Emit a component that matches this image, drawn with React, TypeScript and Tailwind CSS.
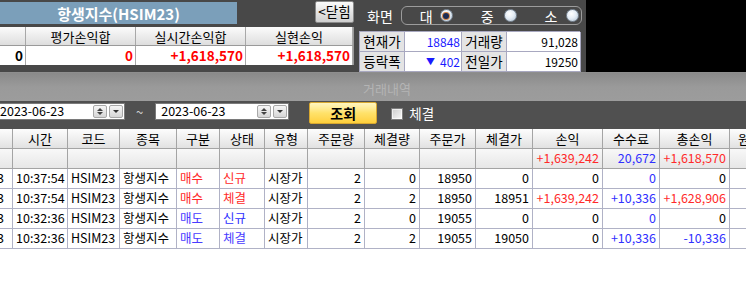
import React from "react";

type Cell = { t: string; c?: string; a?: "l" | "r" | "c" | "d" };

const RED = "text-[#ff2a2a]";
const BLUE = "text-[#3030ff]";
const VIOLET = "text-[#4a3cff]";

const cols =
  "grid grid-cols-[13px_55px_52px_57px_43px_45px_43px_57px_55px_56px_57px_70px_57px_70px_29px]";

const headers = ["", "시간", "코드", "종목", "구분", "상태", "유형", "주문량", "체결량", "주문가", "체결가", "손익", "수수료", "총손익", "원"];

const mk = (
  time: string,
  gb: string,
  gbc: string,
  st: string,
  stc: string,
  q1: string,
  q2: string,
  p1: string,
  p2: string,
  pl: Cell,
  fee: Cell,
  tot: Cell
): Cell[] => [
  { t: "2023-06-23", a: "d" },
  { t: time, a: "l" },
  { t: "HSIM23", a: "l" },
  { t: "항생지수", a: "l" },
  { t: gb, c: gbc, a: "l" },
  { t: st, c: stc, a: "l" },
  { t: "시장가", a: "l" },
  { t: q1, a: "r" },
  { t: q2, a: "r" },
  { t: p1, a: "r" },
  { t: p2, a: "r" },
  { ...pl, a: "r" },
  { ...fee, a: "r" },
  { ...tot, a: "r" },
  { t: "" },
];

const rows: Cell[][] = [
  mk("10:37:54", "매수", RED, "신규", RED, "2", "0", "18950", "0", { t: "0" }, { t: "0", c: BLUE }, { t: "0" }),
  mk("10:37:54", "매수", RED, "체결", RED, "2", "2", "18950", "18951", { t: "+1,639,242", c: RED }, { t: "+10,336", c: BLUE }, { t: "+1,628,906", c: RED }),
  mk("10:32:36", "매도", VIOLET, "신규", BLUE, "2", "0", "19055", "0", { t: "0" }, { t: "0", c: BLUE }, { t: "0" }),
  mk("10:32:36", "매도", VIOLET, "체결", VIOLET, "2", "2", "19055", "19050", { t: "0" }, { t: "+10,336", c: BLUE }, { t: "-10,336", c: BLUE }),
];

const summary: Cell[] = headers.map((_, i) => {
  if (i === 11) return { t: "+1,639,242", c: RED, a: "r" };
  if (i === 12) return { t: "20,672", c: BLUE, a: "r" };
  if (i === 13) return { t: "+1,618,570", c: RED, a: "r" };
  return { t: "" };
});

function Radio({ on }: { on?: boolean }) {
  return (
    <span className="w-[13px] h-[13px] rounded-full border border-[#7d8a98] bg-[radial-gradient(circle_at_40%_35%,#ffffff_0%,#e6eef6_45%,#aebfd0_100%)] flex items-center justify-center">
      {on && <span className="w-[6px] h-[6px] rounded-full bg-[#1c2c55] ring-1 ring-[#d4874a]" />}
    </span>
  );
}

function Spin() {
  return (
    <div className="flex items-center gap-[2px]">
      <div className="w-[14px] h-[13px] rounded-[2px] border border-[#a8a8a8] bg-gradient-to-b from-[#f6f6f6] to-[#d6d6d6] flex flex-col items-center justify-center gap-[1px]">
        <span className="w-0 h-0 border-l-[3px] border-r-[3px] border-b-[3px] border-l-transparent border-r-transparent border-b-[#444]" />
        <span className="w-0 h-0 border-l-[3px] border-r-[3px] border-t-[3px] border-l-transparent border-r-transparent border-t-[#444]" />
      </div>
      <div className="w-[14px] h-[13px] rounded-[2px] border border-[#a8a8a8] bg-gradient-to-b from-[#f6f6f6] to-[#d6d6d6] flex items-center justify-center">
        <span className="w-0 h-0 border-l-[3px] border-r-[3px] border-t-[3px] border-l-transparent border-r-transparent border-t-[#333]" />
      </div>
    </div>
  );
}

function GridCell({ c, h }: { c: Cell; h?: boolean }) {
  const align =
    c.a === "r"
      ? "justify-end pr-[3px]"
      : c.a === "d"
      ? "justify-end pr-[8px]"
      : c.a === "l"
      ? "justify-start pl-[3px]"
      : "justify-center";
  return (
    <div
      className={`h-[20px] flex items-center overflow-hidden whitespace-nowrap border-r border-b ${
        h ? "border-[#a4a4a4]" : "border-[#b0b2c6]"
      } ${align} ${c.c ?? "text-black"}`}
    >
      {c.t}
    </div>
  );
}

export default function App() {
  return (
    <div className="w-[746px] h-[298px] overflow-hidden bg-white relative font-['Noto_Sans_CJK_KR',sans-serif] leading-none">
      {/* top area */}
      <div className="flex h-[72px]">
        <div className="w-[586px] flex flex-col">
          <div className="h-[3px] bg-[#a6a6a6]" />
          <div className="flex-1 bg-[#484848] flex">
            {/* left panel */}
            <div className="w-[355px] flex flex-col">
              <div className="flex h-[24px] items-start">
                <div className="mt-[2px] h-[22px] w-[237px] bg-[#7b9fba] flex items-center justify-center text-white font-bold text-[15px]">
                  항생지수(HSIM23)
                </div>
                <div className="ml-auto mr-[1px] mt-[1px] h-[22px] w-[39px] rounded-[2px] border border-[#8a8a8a] bg-gradient-to-b from-[#fbfbfb] to-[#cfcfcf] flex items-center justify-center text-[13.5px] text-black">
                  &lt;닫힘
                </div>
              </div>
              <div className="mt-[3px] w-[354px] border-r border-[#9a9a9a]">
                <div className="grid grid-cols-[26px_110px_110px_107px] h-[18px] bg-gradient-to-b from-[#fbfbfb] to-[#dedede] text-[13px] text-black">
                  {["", "평가손익합", "실시간손익합", "실현손익"].map((t, i) => (
                    <div key={i} className="flex items-center justify-center border-r border-[#a8a8a8]">
                      {t}
                    </div>
                  ))}
                </div>
                <div className="grid grid-cols-[26px_110px_110px_107px] h-[20px] bg-white text-[13.5px] font-bold border-t border-[#9a9a9a]">
                  <div className="flex items-center justify-end pr-[2px] border-r border-[#a8a8a8] text-black">0</div>
                  <div className="flex items-center justify-end pr-[2px] border-r border-[#a8a8a8] text-[#ff0000]">0</div>
                  <div className="flex items-center justify-end pr-[2px] border-r border-[#a8a8a8] text-[#ff0000]">+1,618,570</div>
                  <div className="flex items-center justify-end pr-[2px] border-r border-[#a8a8a8] text-[#ff0000]">+1,618,570</div>
                </div>
              </div>
            </div>
            {/* right panel */}
            <div className="flex-1 flex flex-col pl-[4px]">
              <div className="flex items-center h-[28px] pt-[3px]">
                <span className="ml-[8px] text-white text-[14px]">화면</span>
                <div className="ml-[8px] w-[181px] h-[19px] rounded-[6px] border border-[#9c9c9c] flex items-center text-white text-[14px]">
                  <span className="ml-[18px]">대</span>
                  <span className="ml-[7px]"><Radio on /></span>
                  <span className="ml-[28px]">중</span>
                  <span className="ml-[10px]"><Radio /></span>
                  <span className="ml-[28px]">소</span>
                  <span className="ml-[9px]"><Radio /></span>
                </div>
              </div>
              <div className="mt-[3px] w-[221px] border-l border-t border-[#a8a8c0] grid grid-cols-[45px_57px_45px_74px] text-black">
                <div className="h-[20px] bg-[#e4e4e4] border-r border-b border-[#a8a8c0] flex items-center justify-center text-[13.5px]">현재가</div>
                <div className="h-[20px] bg-white border-r border-b border-[#a8a8c0] flex items-center justify-end pr-[1px] text-[12px] text-[#1a1aff]">18848</div>
                <div className="h-[20px] bg-[#e4e4e4] border-r border-b border-[#a8a8c0] flex items-center justify-center text-[13.5px]">거래량</div>
                <div className="h-[20px] bg-white border-r border-b border-[#a8a8c0] flex items-center justify-end pr-[2px] text-[12px]">91,028</div>
                <div className="h-[20px] bg-[#e4e4e4] border-r border-b border-[#a8a8c0] flex items-center justify-center text-[13.5px]">등락폭</div>
                <div className="h-[20px] bg-white border-r border-b border-[#a8a8c0] flex items-center justify-end pr-[1px] text-[12px] text-[#1a1aff]">
                  <span className="text-[9px] mr-[5px]">▼</span>402
                </div>
                <div className="h-[20px] bg-[#e4e4e4] border-r border-b border-[#a8a8c0] flex items-center justify-center text-[13.5px]">전일가</div>
                <div className="h-[20px] bg-white border-r border-b border-[#a8a8c0] flex items-center justify-end pr-[2px] text-[12px]">19250</div>
              </div>
            </div>
          </div>
        </div>
        <div className="flex-1 bg-black" />
      </div>

      {/* lower panel title */}
      <div className="h-[29px] bg-gradient-to-b from-[#8a8a8a] via-[#9a9a9a] to-[#9c9c9c] border-t border-[#8e8e8e] flex items-center justify-center pl-[28px] pt-[2px] text-[13px] text-[#b4b4b4]">
        거래내역
      </div>

      {/* toolbar */}
      <div className="h-[28px] bg-[#505050] flex items-start pt-[1px]">
        <div className="mt-[1px] w-[125px] h-[17px] bg-white border border-l-0 border-[#7a7a7a] flex items-center pr-[1px]">
          <span className="text-[12.5px] text-black">2023-06-23</span>
          <span className="ml-auto"><Spin /></span>
        </div>
        <span className="ml-[11px] mt-[3px] text-[#d0d0d0] text-[13px]">~</span>
        <div className="ml-[12px] mt-[1px] w-[134px] h-[17px] bg-white border border-[#7a7a7a] flex items-center pl-[5px] pr-[1px]">
          <span className="text-[12.5px] text-black">2023-06-23</span>
          <span className="ml-auto"><Spin /></span>
        </div>
        <div className="ml-[20px] w-[68px] h-[22px] rounded-[2px] border border-[#d8a830] bg-gradient-to-b from-[#fff6c0] via-[#ffe26a] to-[#ffcf3a] flex items-center justify-center font-bold text-[14px] text-black">
          조회
        </div>
        <div className="ml-[14px] mt-[6px] w-[12px] h-[12px] border border-[#7e7e7e] bg-gradient-to-br from-[#e8e8e8] to-[#ffffff] flex items-center justify-center">
          <span className="w-[8px] h-[8px] bg-gradient-to-br from-[#d0d0d0] to-[#f4f4f4]" />
        </div>
        <span className="ml-[6px] mt-[5px] text-white text-[13.5px]">체결</span>
      </div>

      {/* table */}
      <div className="text-[12.5px]">
        <div className={`${cols} bg-gradient-to-b from-[#fdfdfd] to-[#e0e0e0] text-[13px]`}>
          {headers.map((h, i) => (
            <div key={i} className="h-[20px] flex items-center justify-center border-r border-b border-[#a4a4a4] overflow-hidden whitespace-nowrap text-black">
              {h}
            </div>
          ))}
        </div>
        <div className={`${cols} bg-gradient-to-b from-[#f8f8f8] to-[#e6e6e6]`}>
          {summary.map((c, i) => (
            <GridCell key={i} c={c} h />
          ))}
        </div>
        {rows.map((r, ri) => (
          <div key={ri} className={`${cols} bg-white`}>
            {r.map((c, i) => (
              <GridCell key={i} c={c} />
            ))}
          </div>
        ))}
      </div>
    </div>
  );
}
